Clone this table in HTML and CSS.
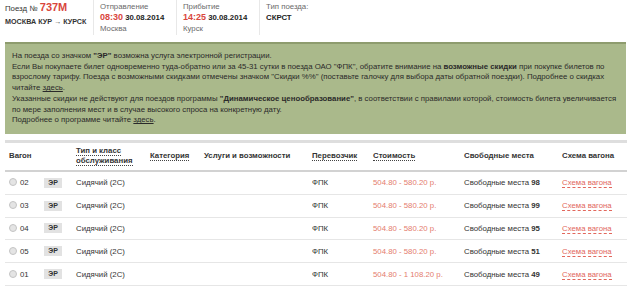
FILE: index.html
```html
<!DOCTYPE html>
<html lang="ru">
<head>
<meta charset="utf-8">
<title>Поезд 737М</title>
<link rel="stylesheet" href="styles.css">
</head>
<body>
<div class="page">
  <header class="trip">
    <div class="trip-train">
      <div class="train-no">Поезд № <span class="train-num">737М</span></div>
      <div class="route">МОСКВА КУР → КУРСК</div>
    </div>
    <div class="trip-col">
      <div class="label">Отправление</div>
      <div class="dt"><span class="time">08:30</span> 30.08.2014</div>
      <div class="place">Москва</div>
    </div>
    <div class="trip-col">
      <div class="label">Прибытие</div>
      <div class="dt"><span class="time">14:25</span> 30.08.2014</div>
      <div class="place">Курск</div>
    </div>
    <div class="trip-col trip-type">
      <div class="label">Тип поезда:</div>
      <div class="dt">СКРСТ</div>
    </div>
  </header>

  <div class="notice">
    <p>На поезда со значком <b>"ЭР"</b> возможна услуга электронной регистрации.<br>
    Если Вы покупаете билет одновременно туда-обратно или за 45-31 сутки в поезда ОАО "ФПК", обратите внимание на <b>возможные скидки</b> при покупке билетов по<br>
    взрослому тарифу. Поезда с возможными скидками отмечены значком "Скидки %%" (поставьте галочку для выбора даты обратной поездки). Подробнее о скидках<br>
    читайте <a href="#">здесь</a>.<br>
    Указанные скидки не действуют для поездов программы <b>"Динамическое ценообразование"</b>, в соответствии с правилами которой, стоимость билета увеличивается<br>
    по мере заполнения мест и в случае высокого спроса на конкретную дату.<br>
    Подробнее о программе читайте <a href="#">здесь</a>.</p>
  </div>

  <table class="cars">
    <colgroup>
      <col class="c-num"><col class="c-er"><col class="c-type"><col class="c-cat"><col class="c-serv">
      <col class="c-carrier"><col class="c-price"><col class="c-seats"><col class="c-scheme">
    </colgroup>
    <thead>
      <tr>
        <th colspan="2">Вагон</th>
        <th><span class="sort">Тип и класс<br>обслуживания</span></th>
        <th><span class="sort">Категория</span></th>
        <th>Услуги и возможности</th>
        <th><span class="sort">Перевозчик</span></th>
        <th><span class="sort">Стоимость</span></th>
        <th>Свободные места</th>
        <th>Схема вагона</th>
      </tr>
    </thead>
    <tbody>
      <tr>
        <td><span class="radio"></span>02</td>
        <td><span class="er">ЭР</span></td>
        <td>Сидячий (2С)</td><td></td><td></td>
        <td>ФПК</td>
        <td class="price">504.80 - 580.20 р.</td>
        <td>Свободные места <b>98</b></td>
        <td><a class="scheme" href="#">Схема вагона</a></td>
      </tr>
      <tr>
        <td><span class="radio"></span>03</td>
        <td><span class="er">ЭР</span></td>
        <td>Сидячий (2С)</td><td></td><td></td>
        <td>ФПК</td>
        <td class="price">504.80 - 580.20 р.</td>
        <td>Свободные места <b>99</b></td>
        <td><a class="scheme" href="#">Схема вагона</a></td>
      </tr>
      <tr>
        <td><span class="radio"></span>04</td>
        <td><span class="er">ЭР</span></td>
        <td>Сидячий (2С)</td><td></td><td></td>
        <td>ФПК</td>
        <td class="price">504.80 - 580.20 р.</td>
        <td>Свободные места <b>95</b></td>
        <td><a class="scheme" href="#">Схема вагона</a></td>
      </tr>
      <tr>
        <td><span class="radio"></span>05</td>
        <td><span class="er">ЭР</span></td>
        <td>Сидячий (2С)</td><td></td><td></td>
        <td>ФПК</td>
        <td class="price">504.80 - 580.20 р.</td>
        <td>Свободные места <b>51</b></td>
        <td><a class="scheme" href="#">Схема вагона</a></td>
      </tr>
      <tr>
        <td><span class="radio"></span>01</td>
        <td><span class="er">ЭР</span></td>
        <td>Сидячий (2С)</td><td></td><td></td>
        <td>ФПК</td>
        <td class="price">504.80 - 1 108.20 р.</td>
        <td>Свободные места <b>49</b></td>
        <td><a class="scheme" href="#">Схема вагона</a></td>
      </tr>
    </tbody>
  </table>
</div>
</body>
</html>
```

FILE: styles.css
```css
html, body {
  margin: 0;
  padding: 0;
  background: #ffffff;
}
body {
  font-family: "Liberation Sans", Arial, sans-serif;
  font-size: 7.8px;
  color: #333333;
}
.page {
  width: 622px;
  margin-left: 5px;
}

/* trip header */
.trip {
  display: flex;
  height: 35px;
}
.trip-train {
  width: 88px;
  padding-top: 1px;
}
.train-no {
  line-height: 13px;
  color: #333;
}
.train-num {
  font-size: 11px;
  font-weight: bold;
  color: #d9463c;
}
.route {
  line-height: 13px;
  font-weight: bold;
  font-size: 7.2px;
}
.trip-col {
  width: 76px;
  border-left: 1px solid #e8e8e8;
  padding: 1px 0 0 6px;
  line-height: 11px;
}
.label, .place {
  color: #6a6a6a;
}
.dt {
  font-weight: bold;
  color: #222;
}
.time {
  font-size: 9px;
  color: #d9463c;
}

/* notice */
.notice {
  margin-top: 7px;
  width: 621px;
  box-sizing: border-box;
  background: #aab98b;
  border-top: 2px solid #8e9c6e;
  padding: 7px 7px 8px 7px;
  color: #2a2a2a;
}
.notice p {
  margin: 0;
  line-height: 10.7px;
  white-space: nowrap;
}
.notice a {
  color: #2a2a2a;
}

/* table */
.cars {
  margin-top: 6px;
  width: 622px;
  border-collapse: collapse;
  table-layout: fixed;
  border-top: 3px solid #dedede;
}
.c-num { width: 35px; }
.c-er { width: 32px; }
.c-type { width: 74px; }
.c-cat { width: 54px; }
.c-serv { width: 108px; }
.c-carrier { width: 61px; }
.c-price { width: 91px; }
.c-seats { width: 98px; }
.c-scheme { width: 69px; }

.cars th {
  text-align: left;
  font-weight: bold;
  color: #333;
  height: 27px;
  padding: 0 0 0 4px;
  line-height: 10px;
  vertical-align: middle;
  border-bottom: 2px solid #d2d2d2;
}
.sort {
  border-bottom: 1px dotted #444;
}
.cars td {
  height: 21.8px;
  padding: 0 0 0 4px;
  border-bottom: 1px solid #e6e6e6;
  vertical-align: middle;
  white-space: nowrap;
  color: #333;
}
.cars .price {
  color: #e47c6e;
}
.radio {
  display: inline-block;
  width: 6px;
  height: 6px;
  border: 1px solid #c4c4c4;
  border-radius: 50%;
  background: #e4e4e4;
  vertical-align: -1px;
  margin-right: 3px;
}
.er {
  display: inline-block;
  background: #e2e2e2;
  font-weight: bold;
  font-size: 7px;
  width: 18px;
  height: 10px;
  line-height: 10px;
  text-align: center;
  color: #333;
}
.scheme {
  color: #e2675c;
  text-decoration: none;
  border-bottom: 1px dashed #e2675c;
}
```
